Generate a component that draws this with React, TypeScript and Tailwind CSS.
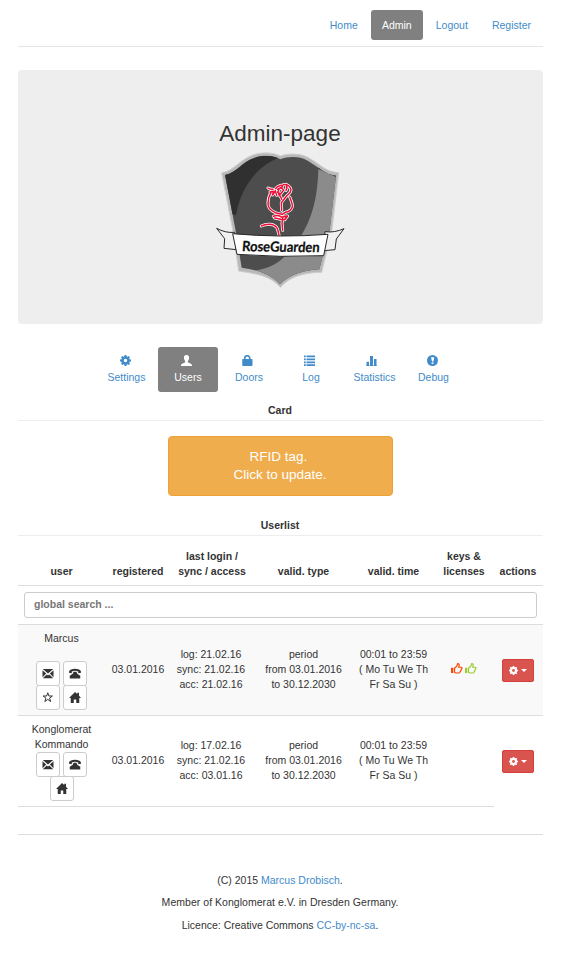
import type { ReactNode } from 'react';

type IconProps = { className?: string };

const GEAR_TEETH = [0, 45, 90, 135, 180, 225, 270, 315];

function Gear({ className = 'size-[11px]' }: IconProps) {
  return (
    <svg className={className} viewBox="0 0 22 22" fill="currentColor">
      <circle cx="11" cy="11" r="6" fill="none" stroke="currentColor" strokeWidth="5" />
      {GEAR_TEETH.map((a) => (
        <path key={a} d="M8.5 4.5 9.2 0h3.600l.7 4.500z" transform={`rotate(${a} 11 11)`} />
      ))}
    </svg>
  );
}

function Person() {
  return (
    <svg className="size-[11px]" viewBox="0 0 22 22" fill="currentColor">
      <path d="M11 0C7.500 0 5.800 2 5.800 5.200c0 3.200 1 5.400 2.600 7v2.300L2.500 17.300C1 18 0 19 0 20.800V22h22v-1.200c0-1.800-1-2.800-2.500-3.500l-5.900-2.800v-2.300c1.600-1.600 2.600-3.800 2.600-7C16.200 2 14.500 0 11 0z" />
    </svg>
  );
}

function Lock() {
  return (
    <svg className="size-[11px]" viewBox="0 0 22 22" fill="currentColor">
      <path d="M5.500 10V6.500a5 5 0 0 1 10 0V10" fill="none" stroke="currentColor" strokeWidth="3.400" />
      <rect x="0.500" y="8" width="20.500" height="14" rx="1.500" />
    </svg>
  );
}

function List() {
  return (
    <svg className="size-[11px]" viewBox="0 0 22 22" fill="currentColor">
      {[1, 7, 13, 18.500].map((y) => (
        <path key={y} d={`M0 ${y}h3.500v3.500H0zM5 ${y}H22v3.500H5z`} />
      ))}
    </svg>
  );
}

function Bars() {
  return (
    <svg className="mr-[3px] size-[11px]" viewBox="0 0 22 22" fill="currentColor">
      <path d="M1 13.500h5V22H1zM8 2h6v20H8zM16 8h5v14h-5zM0 21h22v1H0z" />
    </svg>
  );
}

function Exclamation() {
  return (
    <svg className="size-[11px]" viewBox="0 0 22 22">
      <circle cx="11" cy="11" r="11" fill="currentColor" />
      <path d="M8 4.500h6.500l-1.500 8.500h-3z" fill="#fff" />
      <path d="M9.300 14.800h3.600v3H9.300z" fill="#fff" />
    </svg>
  );
}

function Envelope() {
  return (
    <svg className="h-[11px] w-[12px]" viewBox="0 0 24 22" fill="currentColor">
      <path d="M1.500 2h21L12 11zM1 4.500l7.300 6.700L1 18.500zM23 4.500l-7.300 6.700L23 18.500zM1.500 20.500l8-7.500 2.500 2 2.500-2 8 7.500z" />
    </svg>
  );
}

function Phone() {
  return (
    <svg className="h-[11px] w-[12px]" viewBox="0 0 24 22" fill="currentColor">
      <path d="M0 7.500C1 3 6 1.500 12 1.500s11 1.500 12 6v2l-5.500 1V7c-3.500-1.800-9.500-1.800-13 0v3.500L0 9.500z" />
      <path d="M9 7.500h6l1.500 4 6 4V21H1.500v-5.500l6-4z" />
    </svg>
  );
}

function Star() {
  return (
    <svg className="h-[11px] w-[12px]" viewBox="0 0 24 22" fill="none" stroke="currentColor" strokeWidth="2">
      <path d="m11.500 1.500 2.300 6.500h7l-5.600 4.200 2.100 6.800-5.800-4.100L5.700 19l2.100-6.800L2.200 8h7z" />
    </svg>
  );
}

function Home() {
  return (
    <svg className="h-[11px] w-[12px]" viewBox="0 0 24 22" fill="currentColor">
      <path d="M12 0 16.500 4.200V1.500h3.500v6l4 4.500h-3.500v10h-6v-7h-5v7h-6V12H0z" />
    </svg>
  );
}

function Thumb({ className }: IconProps) {
  return (
    <svg className={className} viewBox="0 0 24 22" fill="none" stroke="currentColor" strokeWidth="2.400">
      <path d="M0 9.500h4.500V20H0z" fill="currentColor" stroke="none" />
      <path d="M7 10.500 12 6l1-4.500c2.500-.5 3.700 1 3.300 3L15.500 8.500h5c2 .5 2 3 .3 3.500 0 2-.6 2.700-1.300 3.200-.2 1.700-.8 2.200-1.500 2.700-.2 1.600-1 2.100-2.500 2.100H9.500L7 18.500z" />
    </svg>
  );
}

const ROSE = [
  'M203 234c5 4 9 4 15 4m-9 8 10-2-2 11 8-13 4 14m-3-20c3-6 8-8 12-9 4-2 8-2 9 2l-5 6m-10 3 10-6 8 8-9 12-9-5 4-9m13-14c12-2 21 5 23 16-1 10-9 13-15 20l-14 18 1 23m-9-49c3 5 8 9 9 16m13-45c4 6 4 12 0 18',
  'M212 247c-6 10-9 22-9 33-1 15 9 22 22 28l20 5m23-52c4 9 9 20 8 29-3 10-9 15-21 17l-10 6',
  'M219 319c9-3 19-3 25 3 6-3 12-5 18-4l-9 11-12-1-18-4m-40 24c15-8 36-8 46 4 4 6 5 14 7 24m12-56-3 20 2 21m9-42-2 10',
];

function Crest() {
  return (
    <svg className="mx-auto block h-[140px] w-[134px]" viewBox="41 120 402 420">
      <defs>
        <clipPath id="shield">
          <path d="M74 195C111 186 124 156 164 143c27-9 56-7 76 5 25-9 57-10 82 4 37 22 52 41 85 45l-19 162-31 119c-50 3-89 16-118 45-29-31-68-43-115-50L105 357z" />
        </clipPath>
      </defs>
      <path d="M64 189C102 182 117 149 160 134c30-9 59-6 80 4 29-9 62-8 86 6 36 21 49 41 89 44l-20 171-31 128c-53 1-95 12-124 45-31-36-74-41-125-49L97 358z" fill="#b8b8b8" stroke="#cdcdcd" strokeWidth="3" />
      <g clipPath="url(#shield)">
        <path fill="#4d4d4d" d="M60 120h370v420H60z" />
        <path fill="#303030" d="M60 120h180v22c-61 21-116 79-133 174L86 310z" />
        <path fill="#8b8b8b" d="M354 176l70 25v340H110v-58c61 3 106-7 142-43 73-74 99-151 102-264z" />
        <path fill="#3c3c3c" d="m354 166 60 22v16l-60-27z" />
      </g>
      <g fill="none" strokeLinecap="round" strokeLinejoin="round">
        {ROSE.map((d) => <path key={d} d={d} stroke="#fff" strokeWidth="9" />)}
        {ROSE.map((d) => <path key={d} d={d} stroke="#ee0f38" strokeWidth="4.500" />)}
      </g>
      <g stroke="#292929" strokeWidth="3" strokeLinejoin="round">
        <path fill="#f1f1f1" d="M49 355c17 9 34 14 54 12l5 52-37-4 2-29zM431 356c-18 8-37 12-57 9l-3 57 33-3 4-32z" />
        <path fill="#fff" d="M97 371q143 13 286 2l-13 64q-130 6-260-4z" />
      </g>
      <text x="154" y="425" textLength="233" lengthAdjust="spacingAndGlyphs" transform="rotate(.8 240 420) skewX(-4)" className="font-['Lato',sans-serif] text-[42px] font-bold" fill="#111" stroke="#111" strokeWidth=".8">
        RoseGuarden
      </text>
    </svg>
  );
}

const TABS: { label: string; icon: ReactNode; style: string }[] = [
  { label: 'Settings', icon: <Gear />, style: 'w-[60px] pr-px text-[#428bca]' },
  { label: 'Users', icon: <Person />, style: 'w-[60px] bg-[#808080] text-white' },
  { label: 'Doors', icon: <Lock />, style: 'w-[60px] text-[#428bca]' },
  { label: 'Log', icon: <List />, style: 'w-[62px] text-[#428bca]' },
  { label: 'Statistics', icon: <Bars />, style: 'w-[63px] text-[#428bca]' },
  { label: 'Debug', icon: <Exclamation />, style: 'w-[53px] text-[#428bca]' },
];

const COLUMNS = 'grid grid-cols-[87px_66px_82px_100px_81px_60px_49px] text-center';

function IconButton({ children }: { children: ReactNode }) {
  return (
    <button className="flex h-[25px] w-[24px] items-center justify-center rounded-[3px] border border-[#ccc] bg-white pb-px">
      {children}
    </button>
  );
}

type User = { name: ReactNode; log: string; acc: string; star: boolean; keys: boolean };

const USERS: User[] = [
  { name: 'Marcus', log: '21.02.16', acc: '21.02.16', star: true, keys: true },
  { name: <>Konglomerat<br />Kommando</>, log: '17.02.16', acc: '03.01.16', star: false, keys: false },
];

function UserRow({ user }: { user: User }) {
  const line = user.keys ? 'border-b border-[#ddd]' : '';
  const cellLine = user.keys ? '' : 'border-b border-[#ddd]';
  return (
    <div className={`${COLUMNS} h-[91px] items-stretch ${line} ${user.keys ? 'bg-[#f9f9f9]' : ''}`}>
      <div className={`pt-[6px] ${cellLine}`}>
        <div className="h-[30px]">{user.name}</div>
        <div className="flex justify-center gap-[3px]">
          <IconButton><Envelope /></IconButton>
          <IconButton><Phone /></IconButton>
        </div>
        <div className="-mt-px flex justify-center gap-[3px]">
          {user.star && <IconButton><Star /></IconButton>}
          <IconButton><Home /></IconButton>
        </div>
      </div>
      <div className={`pt-[37px] ${cellLine}`}>03.01.2016</div>
      <div className={`pt-[22px] pr-[2px] ${cellLine}`}>log: {user.log}<br />sync: 21.02.16<br />acc: {user.acc}</div>
      <div className={`pt-[22px] pl-px ${cellLine}`}>period<br />from 03.01.2016<br />to 30.12.2030</div>
      <div className={`pt-[22px] ${cellLine}`}>00:01 to 23:59<br />( Mo Tu We Th<br />Fr Sa Su )</div>
      <div className={`flex justify-center gap-[2px] pt-[38px] ${cellLine}`}>
        {user.keys && (
          <>
            <Thumb className="h-[11px] w-[12px] text-[#ff4500]" />
            <Thumb className="h-[11px] w-[12px] text-[#9acd32]" />
          </>
        )}
      </div>
      <div className="pt-[34px]">
        <button className="ml-[8px] flex h-[23px] w-[32px] items-center justify-center gap-[3px] rounded-[2px] border border-[#d43f3a] bg-[#d9534f] text-white">
          <Gear className="mb-px size-[9px]" />
          <svg className="h-[3px] w-[6px]" viewBox="0 0 6 3" fill="currentColor"><path d="M0 0h6L3 3z" /></svg>
        </button>
      </div>
    </div>
  );
}

export default function App() {
  return (
    <div className="min-h-[966px] w-[567px] bg-white pt-[10px] pr-[24px] pl-[18px] font-['Liberation_Sans',Arial,sans-serif] text-[10.5px] leading-[15px] text-[#333]">
      <header className="flex h-[37px] items-start justify-end gap-[2px] border-b border-[#e5e5e5] pr-px text-[#428bca]">
        <a className="px-[11px] py-[7.500px]">Home</a>
        <a className="h-[30px] w-[52px] rounded-[3px] bg-[#808080] py-[7.500px] text-center text-white">Admin</a>
        <a className="px-[11px] py-[7.500px]">Logout</a>
        <a className="px-[11px] py-[7.500px]">Register</a>
      </header>

      <section className="mt-[23px] h-[254px] rounded-[4px] bg-[#eee] pt-[51px] text-center">
        <h1 className="h-[29px] pr-px text-[22.500px] leading-[25px]">Admin-page</h1>
        <Crest />
      </section>

      <nav className="mt-[23px] flex gap-px pl-[79px]">
        {TABS.map((t) => (
          <a key={t.label} className={`flex h-[45px] flex-col items-center rounded-[3px] pt-[8px] ${t.style}`}>
            <span className="mr-[3px] mb-[4px]">{t.icon}</span>
            <span>{t.label}</span>
          </a>
        ))}
      </nav>

      <h2 className="mt-[10px] h-[19px] border-b border-[#eee] pt-px pr-px text-center font-bold">Card</h2>
      <button className="mx-auto mt-[15px] block h-[60px] w-[225px] rounded-[4px] border border-[#eea236] bg-[#f0ad4e] pr-px text-[13.500px] leading-[18px] text-white">
        <span className="pr-[3px]">RFID tag.</span><br />Click to update.
      </button>

      <h2 className="mt-[21px] h-[19px] border-b border-[#eee] pt-px pr-px text-center font-bold">Userlist</h2>
      <div className={`${COLUMNS} h-[50px] items-end border-b border-[#ddd] pb-[6px] font-bold`}>
        <span>user</span>
        <span>registered</span>
        <span>last login /<br />sync / access</span>
        <span className="pl-px">valid. type</span>
        <span>valid. time</span>
        <span>keys &amp;<br />licenses</span>
        <span className="pr-px">actions</span>
      </div>
      <div className="h-[39px] border-b border-[#ddd] px-[6px] pt-[6px]">
        <input
          placeholder="global search ..."
          className="block h-[26px] w-full rounded-[3px] border border-[#ccc] bg-white px-[9px] pb-[2px] font-bold placeholder:text-[#777]"
        />
      </div>
      {USERS.map((u) => <UserRow key={u.log} user={u} />)}

      <footer className="mt-[27px] flex flex-col gap-[7.500px] border-t border-[#ddd] pt-[38px] text-center">
        <p className="pr-px">(C) 2015 <a className="text-[#428bca]">Marcus Drobisch</a>.</p>
        <p className="-mt-[.6px] mb-[.6px] pr-px tracking-[.035px]">Member of Konglomerat e.V. in Dresden Germany.</p>
        <p className="pr-px">Licence: Creative Commons <a className="text-[#428bca]">CC-by-nc-sa</a>.</p>
      </footer>
    </div>
  );
}
